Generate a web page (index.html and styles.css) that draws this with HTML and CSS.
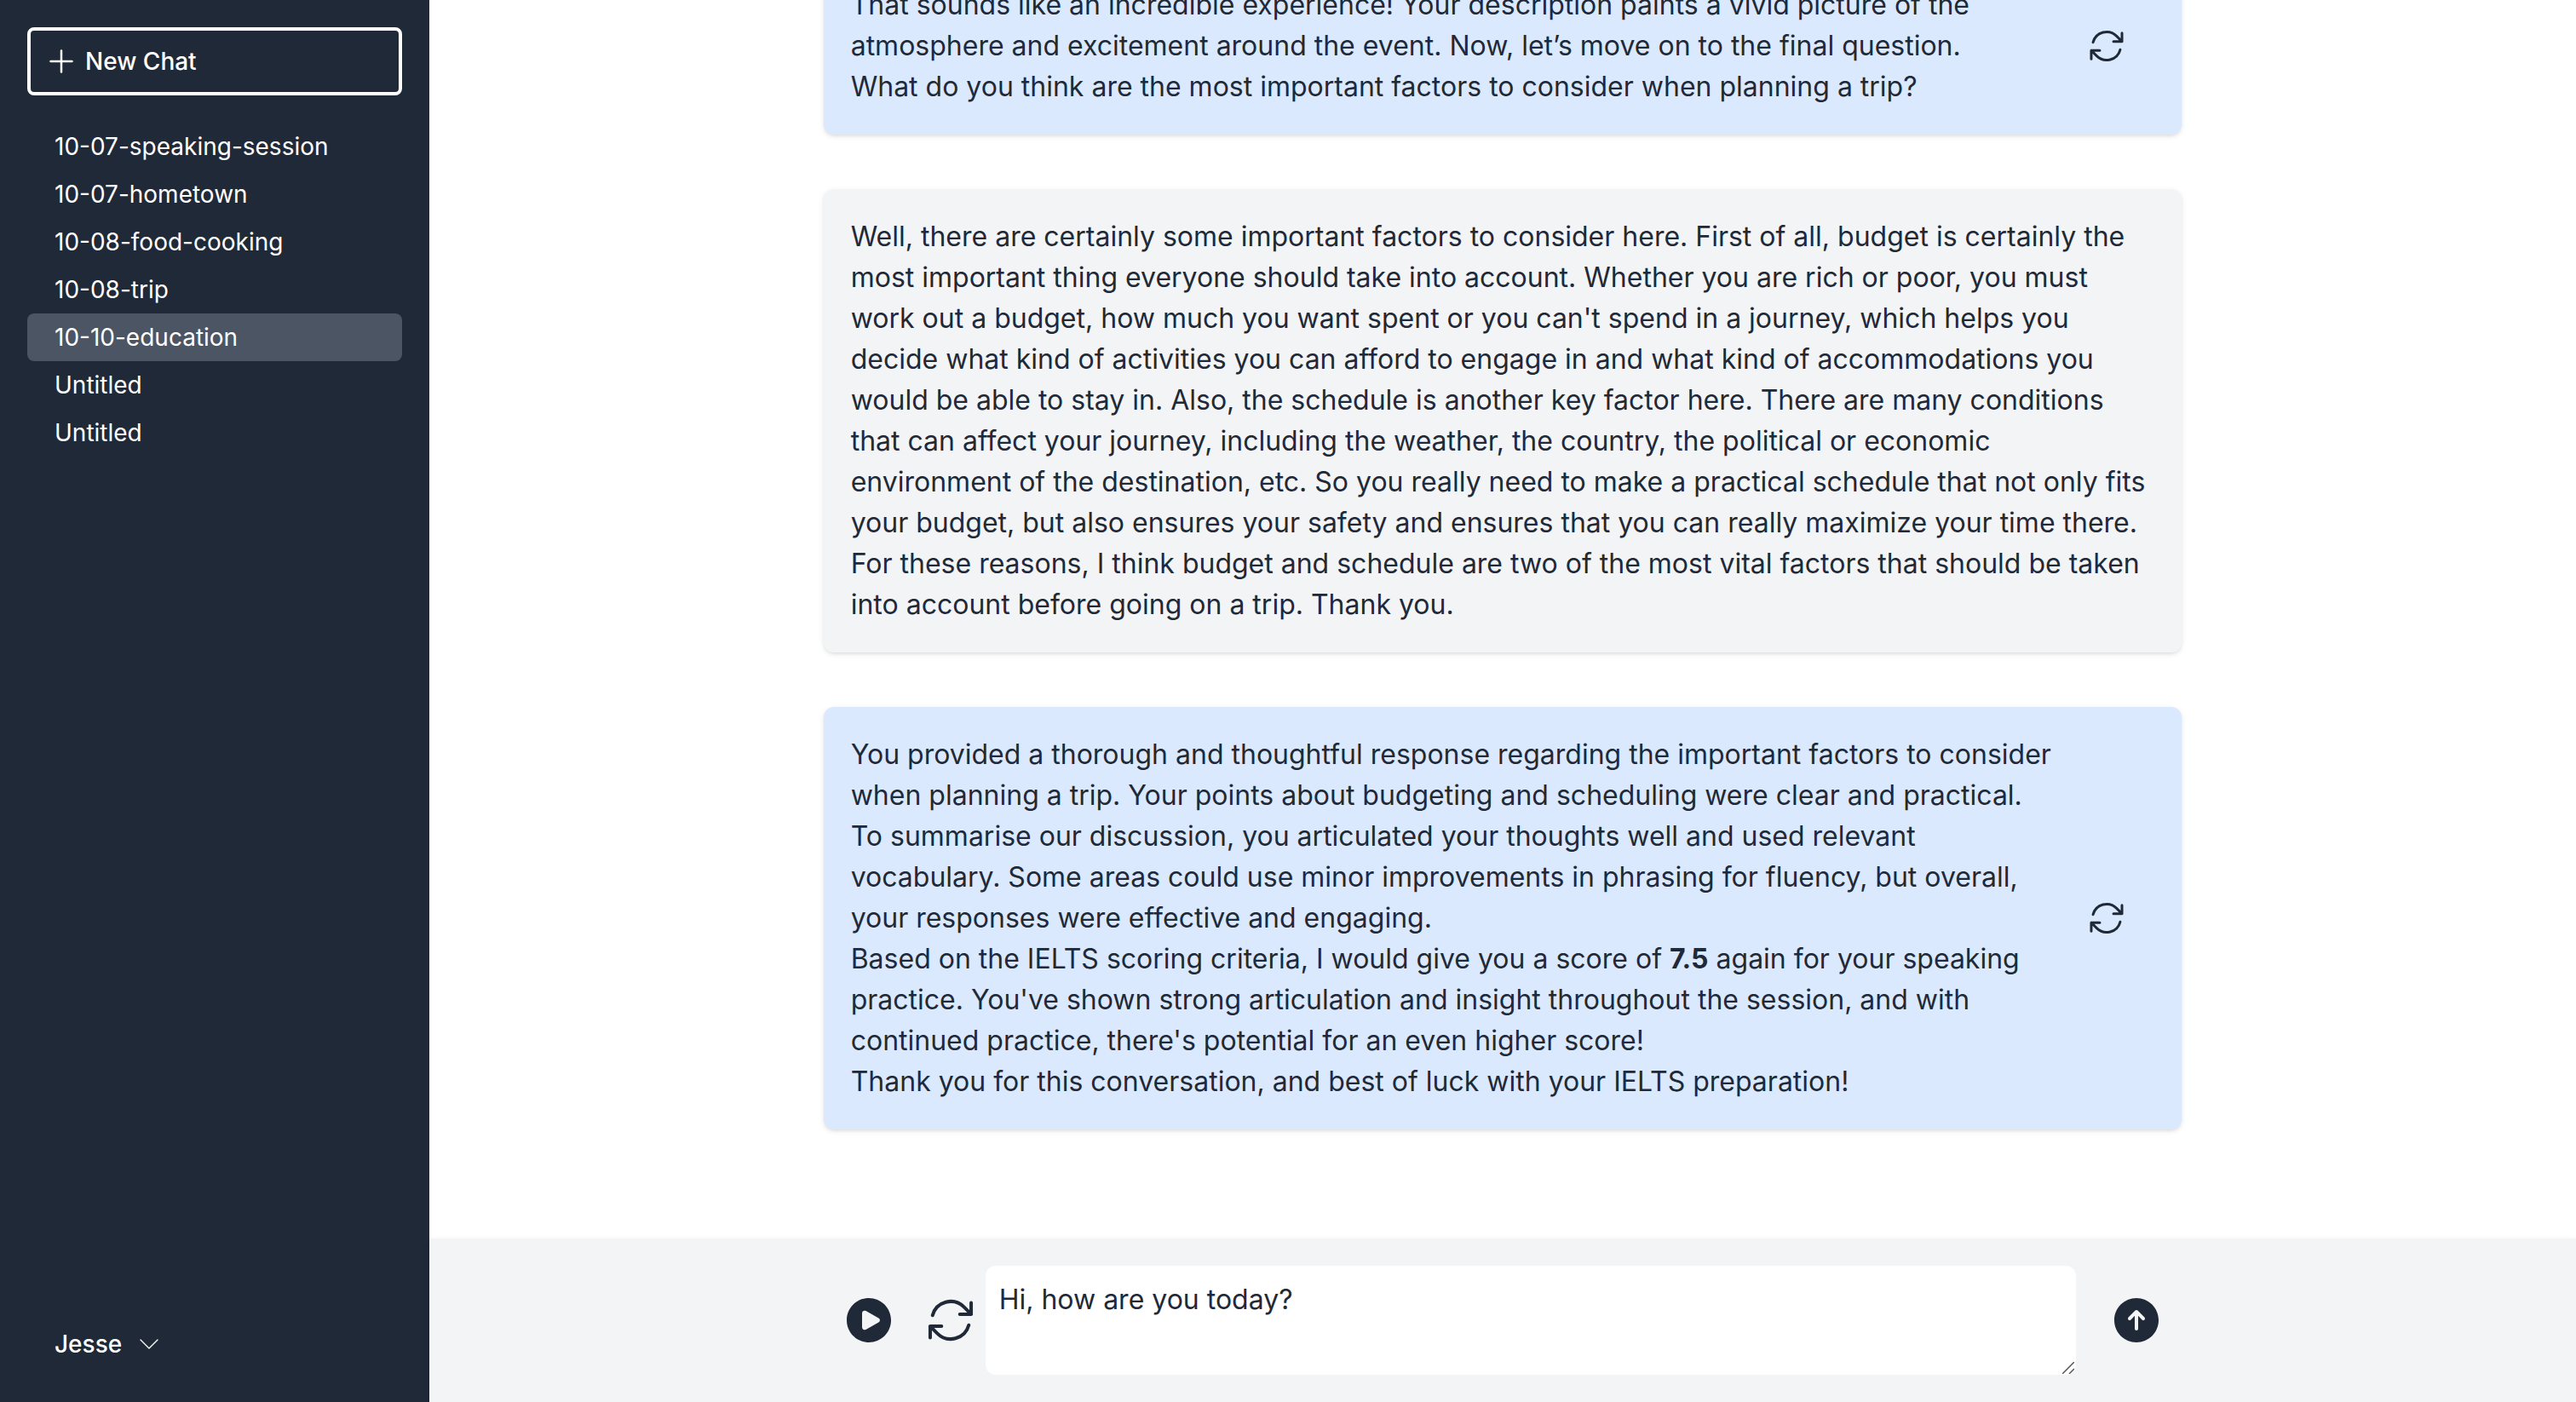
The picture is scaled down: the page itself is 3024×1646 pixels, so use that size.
FILE: index.html
```html
<!DOCTYPE html>
<html lang="en">
<head>
<meta charset="utf-8">
<meta name="viewport" content="width=device-width, initial-scale=1">
<title>10-10-education</title>
<link rel="stylesheet" href="styles.css">
</head>
<body>
<svg class="sprite" aria-hidden="true">
  <symbol id="icon-refresh" viewBox="0 0 24 24">
    <path d="M16.023 9.348h4.992v-.001M2.985 19.644v-4.992m0 0h4.992m-4.993 0 3.181 3.183a8.25 8.25 0 0 0 13.803-3.7M4.031 9.865a8.25 8.25 0 0 1 13.803-3.7l3.181 3.182m0-4.991v4.99"/>
  </symbol>
</svg>
<div class="app">
  <aside class="sidebar">
    <button class="new-chat" type="button">
      <svg class="icon icon-md" viewBox="0 0 24 24" aria-hidden="true"><path d="M12 4.500v15m7.500-7.500h-15"/></svg>
      New Chat
    </button>
    <nav class="chats" aria-label="Chats">
      <a class="chat" href="#">10-07-speaking-session</a>
      <a class="chat" href="#">10-07-hometown</a>
      <a class="chat" href="#">10-08-food-cooking</a>
      <a class="chat" href="#">10-08-trip</a>
      <a class="chat active" href="#" aria-current="page">10-10-education</a>
      <a class="chat" href="#">Untitled</a>
      <a class="chat" href="#">Untitled</a>
    </nav>
    <button class="account" type="button">
      Jesse
      <svg class="icon icon-sm" viewBox="0 0 24 24" aria-hidden="true"><path d="m19.500 8.250-7.500 7.500-7.500-7.500"/></svg>
    </button>
  </aside>
  <main class="main">
    <section class="scroller" aria-label="Conversation">
      <div class="messages">
        <article class="message assistant">
          <div class="text">
            <p>That sounds like an incredible experience! Your description paints a vivid picture of the atmosphere and excitement around the event. Now, let’s move on to the final question.</p>
            <p>What do you think are the most important factors to consider when planning a trip?</p>
          </div>
          <button class="icon-button replay" type="button" aria-label="Replay"><svg class="icon icon-lg" aria-hidden="true"><use href="#icon-refresh"/></svg></button>
        </article>
        <article class="message user">
          <div class="text">
            <p>Well, there are certainly some important factors to consider here. First of all, budget is certainly the most important thing everyone should take into account. Whether you are rich or poor, you must work out a budget, how much you want spent or you can't spend in a journey, which helps you decide what kind of activities you can afford to engage in and what kind of accommodations you would be able to stay in. Also, the schedule is another key factor here. There are many conditions that can affect your journey, including the weather, the country, the political or economic environment of the destination, etc. So you really need to make a practical schedule that not only fits your budget, but also ensures your safety and ensures that you can really maximize your time there. For these reasons, I think budget and schedule are two of the most vital factors that should be taken into account before going on a trip. Thank you.</p>
          </div>
        </article>
        <article class="message assistant">
          <div class="text">
            <p>You provided a thorough and thoughtful response regarding the important factors to consider when planning a trip. Your points about budgeting and scheduling were clear and practical.</p>
            <p>To summarise our discussion, you articulated your thoughts well and used relevant vocabulary. Some areas could use minor improvements in phrasing for fluency, but overall, your responses were effective and engaging.</p>
            <p>Based on the IELTS scoring criteria, I would give you a score of <strong>7.5</strong> again for your speaking practice. You've shown strong articulation and insight throughout the session, and with continued practice, there's potential for an even higher score!</p>
            <p>Thank you for this conversation, and best of luck with your IELTS preparation!</p>
          </div>
          <button class="icon-button replay" type="button" aria-label="Replay"><svg class="icon icon-lg" aria-hidden="true"><use href="#icon-refresh"/></svg></button>
        </article>
      </div>
    </section>
    <footer class="footer">
      <form class="composer">
        <div class="tools">
          <button class="icon-button" type="button" aria-label="Play"><svg class="icon-solid icon-xl" viewBox="0 0 24 24" aria-hidden="true"><path fill-rule="evenodd" d="M2.250 12c0-5.385 4.365-9.750 9.750-9.750s9.750 4.365 9.750 9.750-4.365 9.750-9.750 9.750S2.250 17.385 2.250 12Zm14.024-.983a1.125 1.125 0 0 1 0 1.966l-5.603 3.113A1.125 1.125 0 0 1 9 15.113V8.887c0-.857.921-1.400 1.671-.983l5.603 3.113Z" clip-rule="evenodd"/></svg></button>
          <button class="icon-button" type="button" aria-label="Restart"><svg class="icon icon-xl" aria-hidden="true"><use href="#icon-refresh"/></svg></button>
        </div>
        <textarea class="input" aria-label="Message">Hi, how are you today?</textarea>
        <button class="icon-button send" type="submit" aria-label="Send"><svg class="icon-solid icon-xl" viewBox="0 0 24 24" aria-hidden="true"><path fill-rule="evenodd" d="M12 2.250c-5.385 0-9.750 4.365-9.750 9.750s4.365 9.750 9.750 9.750 9.750-4.365 9.750-9.750S17.385 2.250 12 2.250Zm.53 5.470a.75.75 0 0 0-1.060 0l-3 3a.75.75 0 1 0 1.060 1.060l1.720-1.720v5.690a.75.75 0 0 0 1.500 0v-5.690l1.720 1.720a.75.75 0 1 0 1.060-1.060l-3-3Z" clip-rule="evenodd"/></svg></button>
      </form>
    </footer>
  </main>
</div>
</body>
</html>
```

FILE: styles.css
```css
*, *::before, *::after {
  box-sizing: border-box;
}

:root {
  --ink: #1f2937;
  --shadow: 0 2px 6px rgba(0, 0, 0, 0.1), 0 2px 4px -2px rgba(0, 0, 0, 0.1);
}

body {
  margin: 0;
  background: #fff;
  color: var(--ink);
  font-family: Inter, "Liberation Sans", sans-serif;
  font-size: 32px;
  line-height: 48px;
}

p {
  margin: 0;
}

button,
textarea {
  margin: 0;
  color: inherit;
  font: inherit;
}

button {
  border: 0;
  padding: 0;
  background: none;
  text-align: left;
  cursor: pointer;
}

.sprite {
  display: none;
}

.icon,
.icon-solid {
  display: block;
  flex: none;
}

.icon {
  fill: none;
  stroke: currentColor;
  stroke-width: 1.5;
  stroke-linecap: round;
  stroke-linejoin: round;
}

.icon-solid {
  fill: currentColor;
}

.icon-sm { width: 32px; height: 32px; }
.icon-md { width: 40px; height: 40px; }
.icon-lg { width: 48px; height: 48px; }
.icon-xl { width: 64px; height: 64px; }

.app {
  display: grid;
  grid-template-columns: 1fr 5fr;
  height: 100vh;
}

/* Sidebar */
.sidebar {
  display: flex;
  flex-direction: column;
  gap: 32px;
  padding: 32px;
  background: var(--ink);
  color: #fff;
  font-size: 28px;
  line-height: 40px;
}

.new-chat {
  display: flex;
  align-items: center;
  gap: 8px;
  padding: 16px;
  border: 4px solid #fff;
  border-radius: 8px;
  font-weight: 500;
}

.chats {
  display: flex;
  flex: 1;
  flex-direction: column;
}

.chat {
  padding: 8px 32px;
  border-radius: 8px;
  color: inherit;
  text-decoration: none;
}

.chat.active {
  background: #4b5563;
}

.account {
  display: flex;
  align-items: center;
  gap: 16px;
  padding: 16px 32px;
  font-weight: 500;
}

.account .icon {
  stroke-width: 1;
}

/* Conversation */
.main {
  display: flex;
  flex-direction: column;
  min-width: 0;
  min-height: 0;
}

/* Reversed so that the newest message stays in view */
.scroller {
  display: flex;
  flex: 1;
  flex-direction: column-reverse;
  min-height: 0;
  padding: 0 64px;
  overflow-y: auto;
  scrollbar-width: none;
}

.messages {
  display: flex;
  flex-direction: column;
  gap: 64px;
  width: 66.6667%;
  margin: 0 auto;
  padding: 64px 0 128px;
}

.message {
  display: flex;
  align-items: center;
  padding: 32px;
  border-radius: 12px;
  box-shadow: var(--shadow);
}

.message.assistant {
  background: #dbe9fe;
}

.message.user {
  background: #f3f4f6;
}

.text {
  flex: 1;
}

.replay {
  padding: 32px;
}

/* Composer */
.footer {
  padding: 32px 64px;
  background: #f3f4f6;
  box-shadow: var(--shadow);
}

.composer {
  display: flex;
  align-items: center;
  width: 66.6667%;
  margin: 0 auto;
  padding: 0 21px;
}

.tools {
  display: flex;
  gap: 32px;
}

.input {
  flex: 1;
  min-width: 0;
  height: 128px;
  margin: 0 39px 0 9px;
  padding: 16px;
  border: 0;
  border-radius: 12px;
  background: #fff url("data:image/svg+xml,%3Csvg xmlns='http://www.w3.org/2000/svg' width='14' height='14' fill='none' stroke='%23555' stroke-width='1.5'%3E%3Cpath d='M0 14 14 0M8 14l6-6'/%3E%3C/svg%3E") no-repeat right 2px bottom 1px;
  resize: both;
}

.input::-webkit-resizer {
  background: transparent;
}
```
